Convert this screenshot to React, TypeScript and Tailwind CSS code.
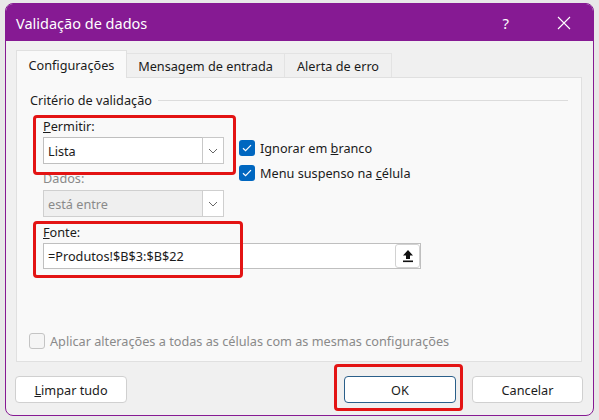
import React from 'react';

const font = { fontFamily: '"Noto Sans", "Open Sans", sans-serif' };

const Check: React.FC<{ checked?: boolean; disabled?: boolean }> = ({ checked, disabled }) =>
  checked ? (
    <span className="flex h-[16px] w-[16px] items-center justify-center rounded-[3px] bg-[#0067c0]">
      <svg width="10" height="8" viewBox="0 0 10 8" fill="none">
        <path d="M1 4.2l2.6 2.5L9 1.2" stroke="white" strokeWidth="1.2" />
      </svg>
    </span>
  ) : (
    <span
      className={`h-[16px] w-[16px] rounded-[3px] border ${
        disabled ? 'border-[#c4c4c4] bg-[#f5f5f5]' : 'border-[#888] bg-white'
      }`}
    />
  );

const Chevron: React.FC = () => (
  <svg width="10" height="6" viewBox="0 0 10 6" fill="none">
    <path d="M1 1l4 4 4-4" stroke="#666" strokeWidth="1" />
  </svg>
);

const Select: React.FC<{ value: string; disabled?: boolean }> = ({ value, disabled }) => (
  <div
    className={`flex h-[27px] w-[181px] items-center border ${
      disabled ? 'border-[#cfcfcf] bg-[#efefef] text-[#8a8a8a]' : 'border-[#bfbfbf] bg-white text-[#1b1b1b]'
    }`}
  >
    <span className="flex-1 pl-[4px]">{value}</span>
    <span
      className={`m-[-1px] flex h-[27px] w-[22px] items-center justify-center border ${
        disabled ? 'border-[#cfcfcf] bg-white' : 'border-[#c8c8c8] bg-white'
      }`}
    >
      <Chevron />
    </span>
  </div>
);

const RedBox: React.FC<{ className: string }> = ({ className }) => (
  <div className={`pointer-events-none absolute rounded-[4px] border-[3px] border-[#e31414] ${className}`} />
);

export default function App() {
  return (
    <div className="h-[420px] w-[599px] bg-[#e8e8e8] pl-[5px] pt-[3px] text-[12.7px] leading-[20px] text-[#1b1b1b]" style={font}>
      <div className="flex h-[413px] w-[589px] flex-col overflow-hidden rounded-[8px] border border-[#861a93] bg-[#f0f0f0]">
        {/* title bar */}
        <div className="flex h-[37px] shrink-0 items-center bg-[#861a93] pl-[10px] text-white">
          <span className="flex-1 text-[14.5px]">Validação de dados</span>
          <span className="mr-[48px] text-[15px]">?</span>
          <svg className="mr-[22px]" width="14" height="14" viewBox="0 0 14 14">
            <path d="M1 1l12 12M13 1L1 13" stroke="white" strokeWidth="1.1" />
          </svg>
        </div>

        <div className="flex flex-col px-[10px] pt-[9px]">
          {/* tabs */}
          <div className="flex h-[27px] items-end">
            <div className="relative z-10 -mb-px flex h-[28px] w-[111px] items-center justify-center border border-b-0 border-[#e0e0e0] bg-[#f9f9f9]">
              Configurações
            </div>
            <div className="flex h-[24px] w-[158px] items-center justify-center border border-l-0 border-b-0 border-[#e3e3e3] bg-[#f0f0f0]">
              Mensagem de entrada
            </div>
            <div className="flex h-[24px] w-[107px] items-center justify-center border border-l-0 border-b-0 border-[#e3e3e3] bg-[#f0f0f0]">
              Alerta de erro
            </div>
          </div>

          {/* panel */}
          <div className="flex h-[285px] w-[566px] flex-col border border-[#e0e0e0] bg-[#f9f9f9] pl-[26px] pt-[12px]">
            <div className="-ml-[13px] flex items-center pr-[13px]">
              <span>Critério de validação</span>
              <span className="ml-[6px] h-px flex-1 bg-[#dcdcdc]" />
            </div>

            <div className="mt-[4px] flex h-[50px] items-start">
              <div className="relative w-[181px]">
                <RedBox className="-left-[10px] -right-[12px] top-[1px] -bottom-[11px]" />
                <div className="pt-[2px]">
                  <span className="underline">P</span>ermitir:
                </div>
                <div className="mt-[1px]">
                  <Select value="Lista" />
                </div>
              </div>
              <div className="ml-[15px] mt-[24px] flex flex-col gap-[5px]">
                <div className="flex items-center gap-[5px]">
                  <Check checked />
                  <span>
                    Ignorar em <span className="underline">b</span>ranco
                  </span>
                </div>
                <div className="flex items-center gap-[5px]">
                  <Check checked />
                  <span>
                    Menu suspenso na <span className="underline">c</span>élula
                  </span>
                </div>
              </div>
            </div>

            <div className="mt-[4px] text-[#8a8a8a]">Dados:</div>
            <div className="mt-[2px]">
              <Select value="está entre" disabled />
            </div>

            <div className="relative mt-[5px] w-[378px]">
              <RedBox className="-left-[10px] -top-[1px] -bottom-[9px] w-[210px]" />
              <div>
                <span className="underline">F</span>onte:
              </div>
              <div className="mt-px flex h-[26px] items-center border border-[#bfbfbf] bg-white">
                <span className="flex-1 pl-[4px]">=Produtos!$B$3:$B$22</span>
                <span className="flex h-[24px] w-[25px] items-center justify-center rounded-[3px] border border-[#d2d2d2] bg-white">
                  <svg width="12" height="14" viewBox="0 0 12 14">
                    <path d="M6 1L11 6.5H8V10H4V6.5H1z" fill="#111" />
                    <rect x="1" y="11.5" width="10" height="1.6" fill="#111" />
                  </svg>
                </span>
              </div>
            </div>

            <div className="-ml-[14px] mt-[62px] flex items-center gap-[5px] text-[#8a8a8a]">
              <Check disabled />
              <span>Aplicar alterações a todas as células com as mesmas configurações</span>
            </div>
          </div>

          {/* buttons */}
          <div className="mt-[14px] flex items-center">
            <button className="-ml-px flex h-[27px] w-[112px] items-center justify-center rounded-[4px] border border-[#d0d0d0] bg-white">
              <span>
                <span className="underline">L</span>impar tudo
              </span>
            </button>
            <div className="relative ml-auto">
              <RedBox className="-left-[10px] -right-[7px] -top-[12px] -bottom-[8px]" />
              <button className="flex h-[27px] w-[112px] items-center justify-center rounded-[4px] border border-[#2a5f8a] bg-white">
                OK
              </button>
            </div>
            <button className="ml-[16px] flex h-[27px] w-[111px] items-center justify-center rounded-[4px] border border-[#d0d0d0] bg-white">
              Cancelar
            </button>
          </div>
        </div>
      </div>
    </div>
  );
}
